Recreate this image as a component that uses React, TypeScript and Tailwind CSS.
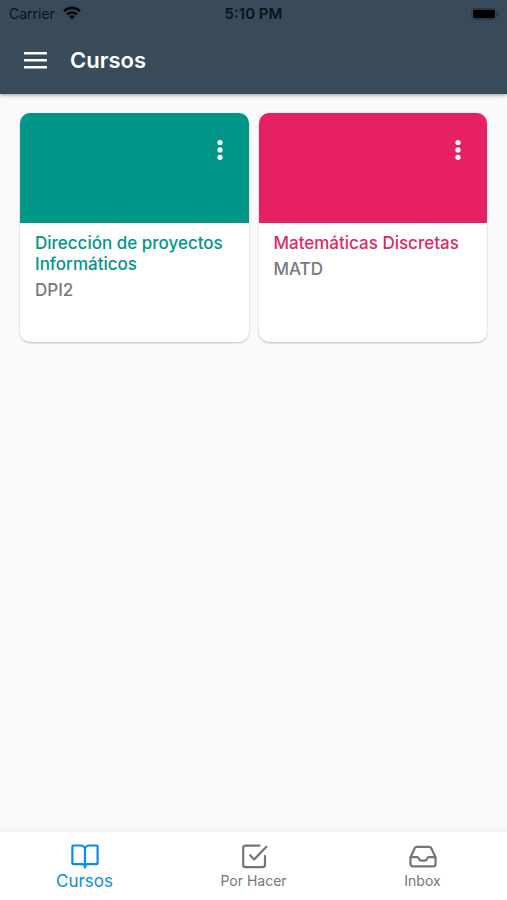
interface Course {
  name: string;
  code: string;
  cover: string;
  text: string;
}

const courses: Course[] = [
  { name: 'Dirección de proyectos Informáticos', code: 'DPI2', cover: 'bg-[#009688]', text: 'text-[#009688]' },
  { name: 'Matemáticas Discretas', code: 'MATD', cover: 'bg-[#e72062]', text: 'text-[#dc2a62]' },
];

function StatusBar() {
  return (
    <div className="grid grid-cols-3 items-center h-7 px-2 text-[#0b1319]">
      <div className="flex items-center gap-2 pl-px text-sm">
        <span>Carrier</span>
        <svg className="w-[18px] h-4" viewBox="0 0 18 16" fill="none" stroke="#05090c" strokeWidth="2.6">
          <path d="M1 5.2a11.4 11.4 0 0 1 16 0" />
          <path d="M4.2 8.5a6.8 6.8 0 0 1 9.600 0" />
          <path d="M9 13.600l-2.900-3a4.100 4.100 0 0 1 5.800 0z" fill="#05090c" stroke="none" />
        </svg>
      </div>
      <div className="text-[15px] leading-5 font-semibold text-center">5:10 PM</div>
      <svg className="justify-self-end w-7 h-3" viewBox="0 0 28 12">
        <rect x="0.5" y="0.5" width="25" height="11" rx="3.5" fill="none" stroke="#2a3942" />
        <rect x="2" y="1.7" width="22" height="8.6" rx="2" fill="#000" />
        <path d="M27 4.2q1 1.8 0 3.6z" fill="#2a3942" stroke="#2a3942" />
      </svg>
    </div>
  );
}

function CourseCard({ course }: { course: Course }) {
  return (
    <article className="flex flex-col h-[229px] bg-white rounded-[10px] overflow-hidden shadow-[0_1px_2px_rgba(0,0,0,0.25)]">
      <div className={`flex justify-end items-start h-[110px] px-[15px] pt-5 ${course.cover}`}>
        <button type="button" aria-label="Opciones" className="flex justify-center items-center w-7 h-8">
          <svg className="w-6 h-6" viewBox="0 0 24 24" fill="#fff">
            <circle cx="12" cy="5.5" r="2.6" />
            <circle cx="12" cy="12.9" r="2.6" />
            <circle cx="12" cy="20.3" r="2.6" />
          </svg>
        </button>
      </div>
      <div className="px-[15px] pt-[10px]">
        <h2 className={`text-[17px] leading-[21px] font-medium ${course.text}`}>{course.name}</h2>
        <p className="mt-[5px] text-[17px] leading-[21px] font-medium text-[#757980]">{course.code}</p>
      </div>
    </article>
  );
}

function BookIcon() {
  return (
    <svg className="w-7 h-7" viewBox="0 0 28 28" fill="none" stroke="currentColor" strokeWidth="2.2" strokeLinecap="round" strokeLinejoin="round">
      <path d="M14 25.6V6.400C13.2 4.500 11.600 3.500 9.600 3.500H2.400a1 1 0 0 0-1 1V21.200a1 1 0 0 0 1 1H11.600c1.400 0 2.400 1 2.400 2.800" />
      <path d="M14 6.400C14.800 4.500 16.400 3.500 18.400 3.500h7.200a1 1 0 0 1 1 1V21.200a1 1 0 0 1-1 1H16.400c-1.400 0-2.400 1-2.400 2.800" />
    </svg>
  );
}

function TodoIcon() {
  return (
    <svg className="w-7 h-7" viewBox="0 0 28 28" fill="none" stroke="currentColor" strokeWidth="2.2" strokeLinecap="round" strokeLinejoin="round">
      <path d="M19.5 3.600H5.600a2.400 2.400 0 0 0-2.400 2.400V22.800a2.400 2.400 0 0 0 2.400 2.400H22.600a2.400 2.400 0 0 0 2.400-2.400V14" />
      <path d="M10.200 13.200l4 4.200L26.400 4.800" />
    </svg>
  );
}

function InboxIcon() {
  return (
    <svg className="w-7 h-7" viewBox="0 0 28 28" fill="none" stroke="currentColor" strokeWidth="2.2" strokeLinecap="round" strokeLinejoin="round">
      <path d="M1.500 15.200L5.700 6.300a2.400 2.400 0 0 1 2.200-1.400H20.100a2.400 2.400 0 0 1 2.200 1.400L26.500 15.200V22a2.400 2.400 0 0 1-2.400 2.400H3.900A2.400 2.400 0 0 1 1.500 22z" />
      <path d="M1.500 15.200H8.400c1.600 0 1.400 3.400 3.600 3.400h4c2.200 0 2-3.400 3.600-3.400H26.500" />
    </svg>
  );
}

function TabBar() {
  return (
    <nav className="grid grid-cols-3 h-[72px] pt-[10px] bg-white border-t-4 border-[#f5f5f5] text-[#757575]">
      <a href="#cursos" aria-current="page" className="flex flex-col items-center gap-px text-[17px] leading-5 text-[#078fdc]">
        <BookIcon />
        Cursos
      </a>
      <a href="#por-hacer" className="flex flex-col items-center gap-px text-sm leading-5">
        <TodoIcon />
        Por Hacer
      </a>
      <a href="#inbox" className="flex flex-col items-center gap-px text-sm leading-5">
        <InboxIcon />
        Inbox
      </a>
    </nav>
  );
}

export default function App() {
  return (
    <div className="flex flex-col min-h-screen bg-[#fafafa] font-['Inter','Liberation_Sans',sans-serif]">
      <header className="bg-[#394b58] shadow-[0_1px_4px_rgba(0,0,0,0.4)]">
        <StatusBar />
        <div className="flex items-center gap-[22px] h-16 mb-[2px] px-6">
          <button type="button" aria-label="Menú">
            <svg className="w-6 h-6" viewBox="0 0 24 24" stroke="#fff" strokeWidth="2.4">
              <path d="M0 5.200h23M0 12.200h23M0 19.200h23" />
            </svg>
          </button>
          <h1 className="text-[22px] leading-7 font-semibold text-white">Cursos</h1>
        </div>
      </header>
      <main className="grow grid grid-cols-2 content-start gap-[10px] px-5 pt-[19px]">
        {courses.map((course) => (
          <CourseCard key={course.code} course={course} />
        ))}
      </main>
      <TabBar />
    </div>
  );
}
